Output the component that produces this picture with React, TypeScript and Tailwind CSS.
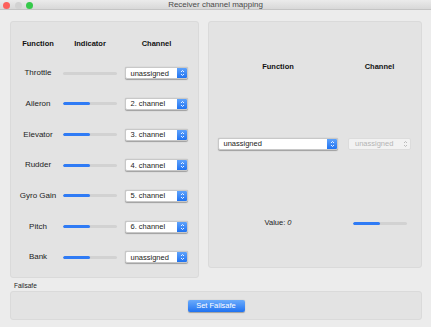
import React from "react";

const rows = [
    { name: "Throttle", value: 0, channel: "unassigned" },
    { name: "Aileron", value: 50, channel: "2. channel" },
    { name: "Elevator", value: 50, channel: "3. channel" },
    { name: "Rudder", value: 50, channel: "4. channel" },
    { name: "Gyro Gain", value: 50, channel: "5. channel" },
    { name: "Pitch", value: 50, channel: "6. channel" },
    { name: "Bank", value: 50, channel: "unassigned" },
];

function Chevrons({ color }: { color: string }) {
    return (
        <svg width="5" height="8" viewBox="0 0 5 8" fill="none">
            <path d="M1 3 L2.5 1.5 L4 3" stroke={color} strokeWidth="0.9" />
            <path d="M1 5 L2.5 6.5 L4 5" stroke={color} strokeWidth="0.9" />
        </svg>
    );
}

function Select({ label, width, disabled }: { label: string; width: string; disabled?: boolean }) {
    if (disabled) {
        return (
            <div className={`${width} h-[12px] flex items-center rounded-[2px] bg-[#f2f2f2] border border-[#dcdcdc]`}>
                <span className="flex-1 pl-[6px] text-[7.5px] leading-none text-[#b4b4b4]">{label}</span>
                <div className="w-[10px] flex justify-center">
                    <Chevrons color="#b4b4b4" />
                </div>
            </div>
        );
    }
    return (
        <div className={`${width} h-[12px] flex items-stretch rounded-[2px] bg-white shadow-[0_0.5px_1px_rgba(0,0,0,0.3)] border-[0.5px] border-[#c8c8c8] overflow-hidden`}>
            <span className="flex-1 flex items-center pl-[4.5px] text-[7.5px] leading-none text-[#222]">{label}</span>
            <div className="w-[10px] flex items-center justify-center bg-gradient-to-b from-[#5ea2fb] to-[#1f73f1]">
                <Chevrons color="#ffffff" />
            </div>
        </div>
    );
}

function Bar({ value }: { value: number }) {
    return (
        <div className="w-[54px] h-[3px] rounded-full bg-[#d2d2d2] overflow-hidden">
            <div className="h-full rounded-full bg-[#2f7bf5]" style={{ width: `${value}%` }} />
        </div>
    );
}

export default function App() {
    return (
        <div
            className="w-[431px] h-[327px] bg-[#ececec] flex flex-col overflow-hidden"
            style={{ fontFamily: '"Liberation Sans", Arial, sans-serif' }}
        >
            {/* Title bar */}
            <div className="relative h-[10px] flex items-center justify-center bg-gradient-to-b from-[#ebebeb] to-[#d8d8d8] border-b border-[#c4c4c4]">
                <div className="absolute left-[3px] top-[1.5px] flex gap-[4.5px]">
                    <div className="w-[7px] h-[7px] rounded-full bg-[#fc605b]" />
                    <div className="w-[7px] h-[7px] rounded-full bg-[#d2d2d2]" />
                    <div className="w-[7px] h-[7px] rounded-full bg-[#35c94a]" />
                </div>
                <span className="text-[8px] leading-none text-[#4a4a4a]">Receiver channel mapping</span>
            </div>

            <div className="flex-1 flex flex-col pt-[11px] pl-[10px] pr-[9px]">
                <div className="flex gap-[9px] items-start">
                    {/* Left panel */}
                    <div className="w-[189px] h-[257px] rounded-[3px] bg-[#e3e3e3] border border-[#dadada] pt-[7px]">
                        <div className="flex items-center h-[29px] text-[7.5px] font-bold text-[#111]">
                            <div className="w-[50px] ml-[2px] text-center">Function</div>
                            <div className="w-[54px] text-center">Indicator</div>
                            <div className="w-[63px] ml-[8px] text-center">Channel</div>
                        </div>
                        {rows.map((r) => (
                            <div key={r.name} className="flex items-center h-[30.67px]">
                                <div className="w-[50px] ml-[2px] text-center text-[8px] text-[#222]">{r.name}</div>
                                <Bar value={r.value} />
                                <div className="ml-[8px]">
                                    <Select label={r.channel} width="w-[63px]" />
                                </div>
                            </div>
                        ))}
                    </div>

                    {/* Right panel */}
                    <div className="w-[214px] h-[247px] rounded-[3px] bg-[#e3e3e3] border border-[#dadada] pl-[9px] pt-[38px]">
                        <div className="flex items-center h-[14px] gap-[10px] text-[7.5px] font-bold text-[#111]">
                            <div className="w-[120px] text-center">Function</div>
                            <div className="w-[63px] text-center">Channel</div>
                        </div>
                        <div className="flex items-center h-[12px] gap-[10px] mt-[64px]">
                            <Select label="unassigned" width="w-[120px]" />
                            <Select label="unassigned" width="w-[63px]" disabled />
                        </div>
                        <div className="flex items-center h-[12px] gap-[10px] mt-[67px]">
                            <div className="w-[120px] text-center text-[7.5px] text-[#222]">
                                Value: <span className="italic">0</span>
                            </div>
                            <div className="w-[63px] flex justify-center">
                                <Bar value={50} />
                            </div>
                        </div>
                    </div>
                </div>

                {/* Failsafe */}
                <div className="mt-[4px] ml-[4px] text-[6.5px] leading-[8px] text-[#222]">Failsafe</div>
                <div className="mt-[1px] h-[29px] rounded-[3px] bg-[#e3e3e3] border border-[#dadada] flex items-center justify-center">
                    <div className="w-[57px] h-[12px] rounded-[2px] bg-gradient-to-b from-[#6aabfb] to-[#1e72f1] flex items-center justify-center text-[7.5px] text-white shadow-[0_0.5px_1px_rgba(0,0,0,0.3)]">
                        Set Failsafe
                    </div>
                </div>
            </div>
        </div>
    );
}
